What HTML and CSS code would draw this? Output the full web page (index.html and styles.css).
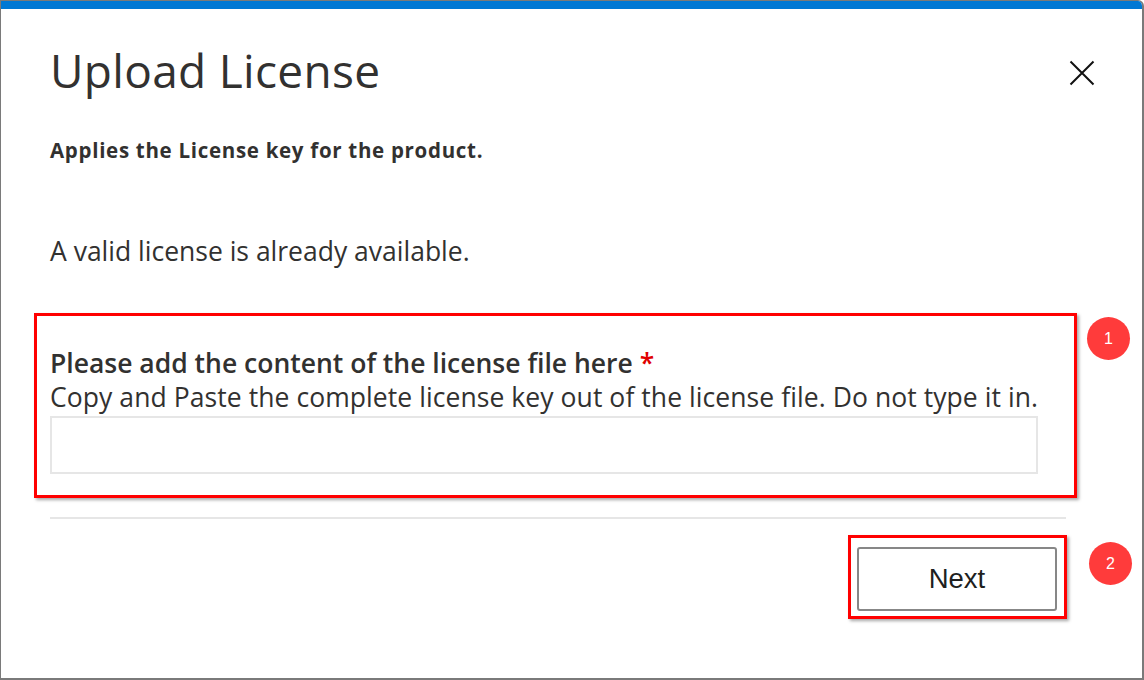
FILE: index.html
```html
<!DOCTYPE html>
<html>
<head>
<meta charset="utf-8">
<link rel="stylesheet" href="styles.css">
</head>
<body>
<div class="window">
  <div class="topbar"></div>
  <div class="dialog">
    <div class="header">
      <h1 class="title">Upload License</h1>
      <button class="close" aria-label="Close">
        <svg width="26" height="26" viewBox="0 0 26 26"><path d="M1.5 1.5 L24.5 24.5 M24.5 1.5 L1.5 24.5" stroke="#111" stroke-width="2" fill="none"/></svg>
      </button>
    </div>
    <p class="subtitle">Applies the License key for the product.</p>
    <p class="status">A valid license is already available.</p>
    <div class="field-wrap">
      <div class="highlight field-box">
        <label class="field-label">Please add the content of the license file here <span class="req">*</span></label>
        <div class="field-desc">Copy and Paste the complete license key out of the license file. Do not type it in.</div>
        <input class="field-input" type="text">
      </div>
      <span class="badge badge-1">1</span>
    </div>
    <hr class="sep">
    <div class="footer">
      <div class="highlight btn-box">
        <button class="btn">Next</button>
      </div>
      <span class="badge badge-2">2</span>
    </div>
  </div>
</div>
</body>
</html>
```
FILE: styles.css
```css
* { box-sizing: border-box; }
html, body { margin: 0; padding: 0; background: #fff; }
body { width: 1144px; height: 680px; overflow: hidden; font-family: "Open Sans", "Noto Sans", sans-serif; color: #323130; }
.window {
  width: 1144px; height: 680px;
  border-left: 1px solid #7a7a7a;
  border-right: 2px solid #7a7a7a;
  border-bottom: 2px solid #7a7a7a;
  border-top: 1px solid #7a7a7a;
  border-top-right-radius: 6px;
  overflow: hidden;
  background: #fff;
}
.topbar { height: 8px; background: #0078d4; }
.dialog { padding: 0 0 0 49px; position: relative; }
.header { display: flex; justify-content: space-between; align-items: flex-start; padding-top: 33px; }
.title { margin: 0; font-size: 46px; font-weight: 400; line-height: 56px; color: #323130; letter-spacing: 0.3px; }
.close { margin: 18px 47px 0 0; padding: 0; border: 0; background: none; width: 26px; height: 26px; display: block; }
.close svg { display: block; }
.subtitle { margin: 40px 0 0; font-size: 20.5px; font-weight: 700; line-height: 24px; color: #323130; letter-spacing: 0.7px; }
.status { margin: 73px 0 0; font-size: 26.5px; line-height: 32px; color: #323130; }
.field-wrap { position: relative; margin: 46px 0 0 -16px; width: 1043px; }
.highlight { border: 3px solid #ff0000; box-shadow: 2px 2px 3px rgba(0,0,0,0.35); }
.field-box { padding: 31px 36px 21px 13px; }
.field-label { display: block; font-size: 26.5px; font-weight: 600; line-height: 32px; color: #323130; }
.req { color: #e00000; }
.field-desc { font-size: 26.5px; line-height: 32px; color: #323130; margin-top: 2px; white-space: nowrap; letter-spacing: 0.07px; }
.field-input { display: block; width: 988px; height: 58px; margin-top: 3px; border: 2px solid #e6e6e6; background: #fff; outline: none; }
.badge { position: absolute; width: 43px; height: 43px; border-radius: 50%; background: #ff3b3b; color: #fff; font-family: "Liberation Sans", Arial, sans-serif; font-size: 16px; line-height: 43px; text-align: center; }
.badge-1 { left: 1053px; top: 4px; }
.sep { margin: 19px 0 0 0; width: 1016px; height: 2px; border: 0; background: #e6e6e6; }
.footer { position: relative; display: flex; justify-content: flex-end; width: 1016px; margin-top: 16px; }
.btn-box { padding: 9px 7px 5px 6px; margin-right: -1px; }
.btn { display: block; width: 200px; height: 64px; border: 2px solid #878787; border-radius: 3px; background: #fff; font-family: "Liberation Sans", Arial, sans-serif; font-size: 27.5px; color: #201f1e; }
.badge-2 { left: 1039px; top: 7px; }
```
